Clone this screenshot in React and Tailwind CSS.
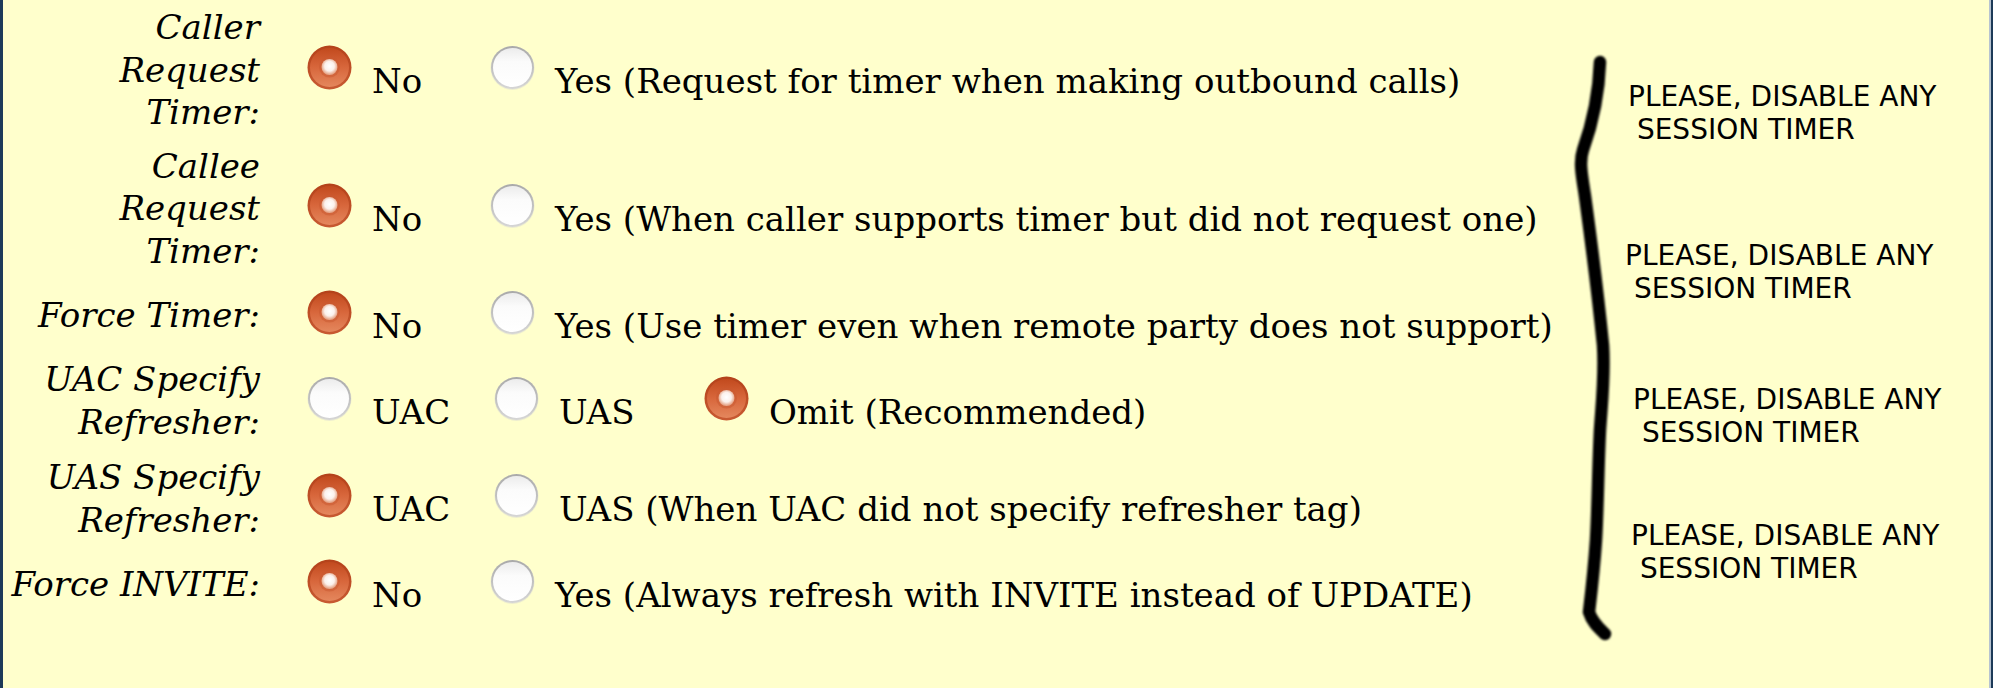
import React from "react";

const rows = [
  {
    label: ["Caller", "Request", "Timer:"],
    h: "h-[128px]",
    options: [
      { on: true, text: "No", w: "w-[183px]" },
      { on: false, text: "Yes (Request for timer when making outbound calls)" },
    ],
  },
  {
    label: ["Callee", "Request", "Timer:"],
    h: "h-[128px]",
    options: [
      { on: true, text: "No", w: "w-[183px]" },
      { on: false, text: "Yes (When caller supports timer but did not request one)" },
    ],
  },
  {
    label: ["Force Timer:"],
    h: "h-[65px]",
    options: [
      { on: true, text: "No", w: "w-[183px]" },
      { on: false, text: "Yes (Use timer even when remote party does not support)" },
    ],
  },
  {
    label: ["UAC Specify", "Refresher:"],
    h: "h-[85px]",
    options: [
      { on: false, text: "UAC", w: "w-[187px]" },
      { on: false, text: "UAS", w: "w-[210px]" },
      { on: true, text: "Omit (Recommended)" },
    ],
  },
  {
    label: ["UAS Specify", "Refresher:"],
    h: "h-[85px] mt-[2px]",
    options: [
      { on: true, text: "UAC", w: "w-[187px]" },
      { on: false, text: "UAS (When UAC did not specify refresher tag)" },
    ],
  },
  {
    label: ["Force INVITE:"],
    h: "h-[65px]",
    options: [
      { on: true, text: "No", w: "w-[183px]" },
      { on: false, text: "Yes (Always refresh with INVITE instead of UPDATE)" },
    ],
  },
];

const notes = ["ml-[4px] mt-[80px]", "ml-[1px] mt-[93px]", "ml-[9px] mt-[78px]", "ml-[7px] mt-[70px]"];

function RadioDefs() {
  return (
    <svg width="0" height="0" className="absolute">
      <defs>
        <linearGradient id="radioOnBody" x1="0" y1="0" x2="0" y2="1">
          <stop offset="0" stopColor="#c24a1e" />
          <stop offset="0.5" stopColor="#d8673c" />
          <stop offset="1" stopColor="#e4875d" />
        </linearGradient>
        <linearGradient id="radioOnRim" x1="0" y1="0" x2="0" y2="1">
          <stop offset="0" stopColor="#b4421a" />
          <stop offset="1" stopColor="#c85a32" />
        </linearGradient>
        <radialGradient id="radioDot" cx="0.5" cy="0.45" r="0.5">
          <stop offset="0" stopColor="#ffffff" />
          <stop offset="0.6" stopColor="#fbf1ec" />
          <stop offset="1" stopColor="#e7a98d" />
        </radialGradient>
        <linearGradient id="radioOffRim" x1="0" y1="0" x2="0" y2="1">
          <stop offset="0" stopColor="#a9a9a9" />
          <stop offset="1" stopColor="#d6d6d6" />
        </linearGradient>
        <linearGradient id="radioOffBody" x1="0" y1="0" x2="0" y2="1">
          <stop offset="0" stopColor="#ececec" />
          <stop offset="0.35" stopColor="#fbfbfb" />
          <stop offset="1" stopColor="#ffffff" />
        </linearGradient>
        <filter id="strokeSoft" x="-50%" y="-5%" width="200%" height="110%">
          <feGaussianBlur stdDeviation="0.9" />
        </filter>
      </defs>
    </svg>
  );
}

function Radio({ on }) {
  return (
    <svg width="45" height="45" viewBox="0 0 45 45" className="inline-block align-baseline mt-[11px] mb-[3px]">
      {on ? (
        <>
          <circle cx="22.5" cy="22.5" r="22" fill="url(#radioOnRim)" />
          <circle cx="22.5" cy="22.5" r="19.5" fill="url(#radioOnBody)" />
          <circle cx="22.5" cy="22" r="10.5" fill="#c95a31" opacity="0.55" />
          <circle cx="22.5" cy="22" r="8" fill="url(#radioDot)" />
        </>
      ) : (
        <>
          <circle cx="22.5" cy="23" r="22" fill="#e6e6d2" opacity="0.7" />
          <circle cx="22.5" cy="22.5" r="21.5" fill="url(#radioOffRim)" />
          <circle cx="22.5" cy="22.5" r="19.5" fill="url(#radioOffBody)" />
        </>
      )}
    </svg>
  );
}

function Brace() {
  return (
    <svg width="54" height="688" viewBox="0 0 54 688" className="shrink-0">
      <path
        d="M30 62 C29 92 23 122 13 150 C9 162 12 176 15 196 C21 240 28 295 33 345 C35 375 32 400 30 430 C28 470 28 505 26 540 C24 570 21 595 19 612 C22 622 29 628 35 634"
        fill="none"
        stroke="#000"
        strokeWidth="12.5"
        strokeLinecap="round"
        strokeLinejoin="round"
        filter="url(#strokeSoft)"
      />
    </svg>
  );
}

export default function App() {
  return (
    <div className="relative flex w-[1993px] h-[688px] overflow-hidden bg-[#ffffcc] text-black">
      <RadioDefs />
      <div className="w-[3px] shrink-0 bg-[#1d3a58]" />
      <div className="w-[1567px] shrink-0 flex flex-col gap-[10.5px] pt-[6px] font-['DejaVu_Serif',serif]">
        {rows.map((row, i) => (
          <div key={i} className={`flex items-center ${row.h}`}>
            <div className="w-[304px] shrink-0 pr-[47px] text-right italic text-[34px] leading-[42.67px]">
              {row.label.map((l) => (
                <div key={l} className="whitespace-nowrap">{l}</div>
              ))}
            </div>
            <div className="whitespace-nowrap text-[34px] leading-normal">
              {row.options.map((o, j) => (
                <span key={j} className={`inline-block ${o.w || ""}`}>
                  <Radio on={o.on} />
                  <span className="ml-[20px]">{o.text}</span>
                </span>
              ))}
            </div>
          </div>
        ))}
      </div>
      <Brace />
      <div className="flex-1 flex flex-col font-['DejaVu_Sans',sans-serif] text-[28px] leading-[33px]">
        {notes.map((c, i) => (
          <div key={i} className={`whitespace-nowrap ${c}`}>
            <div>PLEASE, DISABLE ANY</div>
            <div>{"\u00a0"}SESSION TIMER</div>
          </div>
        ))}
      </div>
      <div className="w-[2px] shrink-0 bg-[#b7c3d0]" />
      <div className="w-[2px] shrink-0 bg-[#1d3a58]" />
    </div>
  );
}
